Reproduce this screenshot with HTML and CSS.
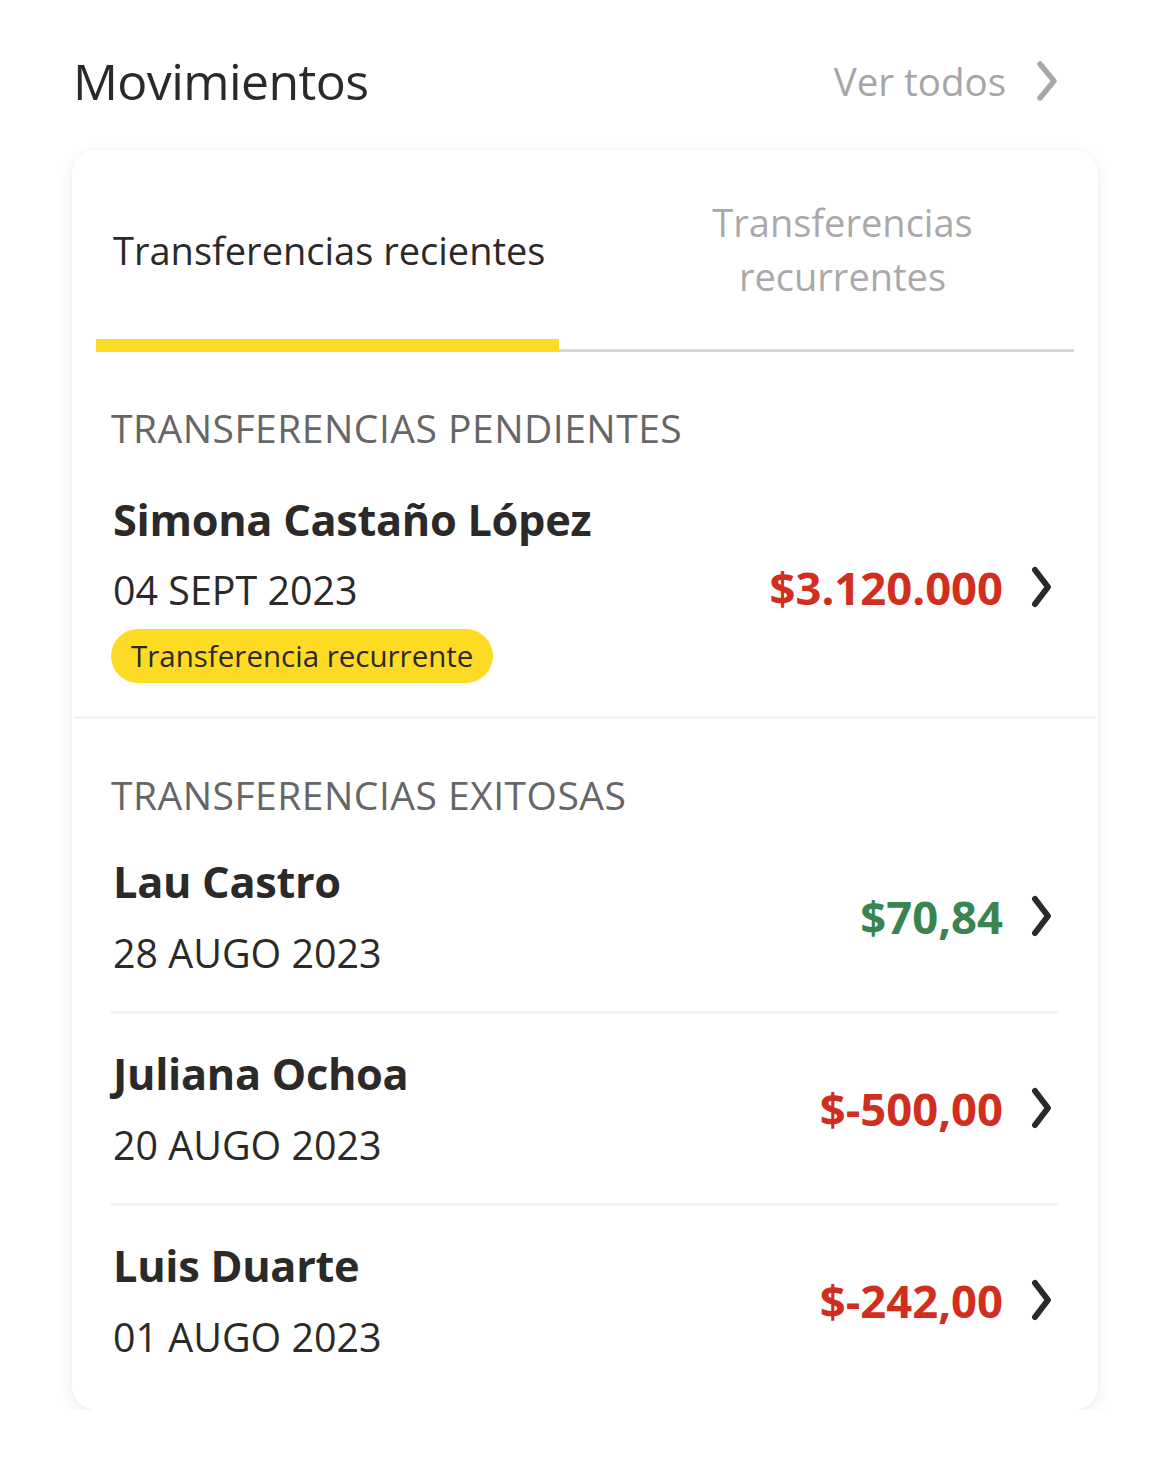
FILE: index.html
```html
<!DOCTYPE html>
<html lang="es">
<head>
<meta charset="utf-8">
<link rel="stylesheet" href="styles.css">
</head>
<body>
<main class="page">
  <header class="head">
    <h1 class="title">Movimientos</h1>
    <a class="see-all">Ver todos
      <svg class="see-all-icon" viewBox="0 0 26 44" width="26" height="44"><path d="M6 5 L20 22 L6 39" fill="none" stroke="#a8a8a8" stroke-width="5.5" stroke-linecap="round" stroke-linejoin="round"/></svg>
    </a>
  </header>

  <section class="card">
    <div class="tabs">
      <div class="tab tab-active">Transferencias recientes</div>
      <div class="tab tab-idle">Transferencias<br>recurrentes</div>
    </div>

    <div class="group group-pending">
      <h2 class="group-title">TRANSFERENCIAS PENDIENTES</h2>
      <div class="row row-pending">
        <div class="info">
          <div class="name">Simona Castaño López</div>
          <div class="date">04 SEPT 2023</div>
          <span class="pill">Transferencia recurrente</span>
        </div>
        <div class="amount neg">$3.120.000</div>
        <svg class="chev" viewBox="0 0 24 44" width="24" height="44"><path d="M5 5 L18 22 L5 39" fill="none" stroke="#2c2a29" stroke-width="6" stroke-linecap="round" stroke-linejoin="round"/></svg>
      </div>
    </div>

    <div class="group group-done">
      <h2 class="group-title">TRANSFERENCIAS EXITOSAS</h2>
      <div class="row">
        <div class="info">
          <div class="name">Lau Castro</div>
          <div class="date">28 AUGO 2023</div>
        </div>
        <div class="amount pos">$70,84</div>
        <svg class="chev" viewBox="0 0 24 44" width="24" height="44"><path d="M5 5 L18 22 L5 39" fill="none" stroke="#2c2a29" stroke-width="6" stroke-linecap="round" stroke-linejoin="round"/></svg>
      </div>
      <div class="row">
        <div class="info">
          <div class="name">Juliana Ochoa</div>
          <div class="date">20 AUGO 2023</div>
        </div>
        <div class="amount neg">$-500,00</div>
        <svg class="chev" viewBox="0 0 24 44" width="24" height="44"><path d="M5 5 L18 22 L5 39" fill="none" stroke="#2c2a29" stroke-width="6" stroke-linecap="round" stroke-linejoin="round"/></svg>
      </div>
      <div class="row">
        <div class="info">
          <div class="name">Luis Duarte</div>
          <div class="date">01 AUGO 2023</div>
        </div>
        <div class="amount neg">$-242,00</div>
        <svg class="chev" viewBox="0 0 24 44" width="24" height="44"><path d="M5 5 L18 22 L5 39" fill="none" stroke="#2c2a29" stroke-width="6" stroke-linecap="round" stroke-linejoin="round"/></svg>
      </div>
    </div>
  </section>
</main>
</body>
</html>
```

FILE: styles.css
```css
* { box-sizing: border-box; }
html, body { margin: 0; padding: 0; background: #ffffff; }
body {
  font-family: "Open Sans", "Noto Sans", sans-serif;
  color: #2c2a29;
}
.page { padding: 48px 72px 0 72px; width: 1170px; }

.head {
  display: flex;
  align-items: center;
  justify-content: space-between;
  height: 66px;
  margin-bottom: 36px;
}
.title {
  margin: 0 0 0 1px;
  font-weight: 400;
  font-size: 50px;
  letter-spacing: -0.6px;
  line-height: 66px;
  color: #2c2a29;
}
.see-all {
  display: flex;
  align-items: center;
  gap: 28px;
  font-size: 38.5px;
  color: #a6a6a6;
  margin-right: 38px;
}

.card {
  background: #fff;
  border-radius: 24px;
  box-shadow: 0 5px 16px rgba(0,0,0,0.08), 0 0 4px rgba(0,0,0,0.03);
  padding: 0 0 15px 0;
}

.tabs {
  display: grid;
  grid-template-columns: 463px 1fr;
  margin: 0 24px;
  height: 202px;
}
.tab {
  display: flex;
  align-items: center;
  font-size: 38px;
  line-height: 54px;
}
.tab-active {
  padding-left: 17px;
  padding-top: 11px;
  color: #2c2a29;
  border-bottom: 13px solid #fddb24;
}
.tab-idle {
  justify-content: center;
  text-align: center;
  padding-left: 52px;
  color: #a9a9a9;
  border-bottom: 3px solid #d6d6d6;
  padding-bottom: 12px;
  margin-top: 10px;
}

.group-title {
  margin: 0;
  font-weight: 400;
  font-size: 39px;
  line-height: 48px;
  color: #666666;
  letter-spacing: 0.5px;
}
.group { padding: 0 39px; }
.group-pending {
  padding: 52px 37px 33px 37px;
  margin: 0 2px;
  border-bottom: 3px solid #f2f2f2;
}
.group-done { padding-top: 52px; }
.group-done .group-title { margin-bottom: 3px; }

.row {
  display: flex;
  align-items: center;
  padding: 30px 0 32px 2px;
  border-bottom: 3px solid #f2f2f2;
}
.row:last-child { border-bottom: none; }
.row-pending { padding: 38px 0 0 2px; border-bottom: none; }

.info { flex: 1; display: flex; flex-direction: column; align-items: flex-start; }
.name {
  font-weight: 700;
  font-size: 43.3px;
  line-height: 60px;
  letter-spacing: -0.3px;
}
.date {
  font-size: 39.4px;
  line-height: 52px;
  margin-top: 15px;
}
.row-pending .date { margin-top: 14px; }
.pill {
  margin-top: 13px;
  margin-left: -2px;
  background: #fddb24;
  border-radius: 27px;
  height: 54px;
  padding: 0 20px;
  font-size: 29.5px;
  line-height: 54px;
  color: #2c2a29;
}
.amount {
  font-weight: 700;
  font-size: 45.4px;
  margin-right: 27px;
}
.neg { color: #d22e1e; }
.pos { color: #3a8450; }
.chev { margin-right: 5px; }
```
